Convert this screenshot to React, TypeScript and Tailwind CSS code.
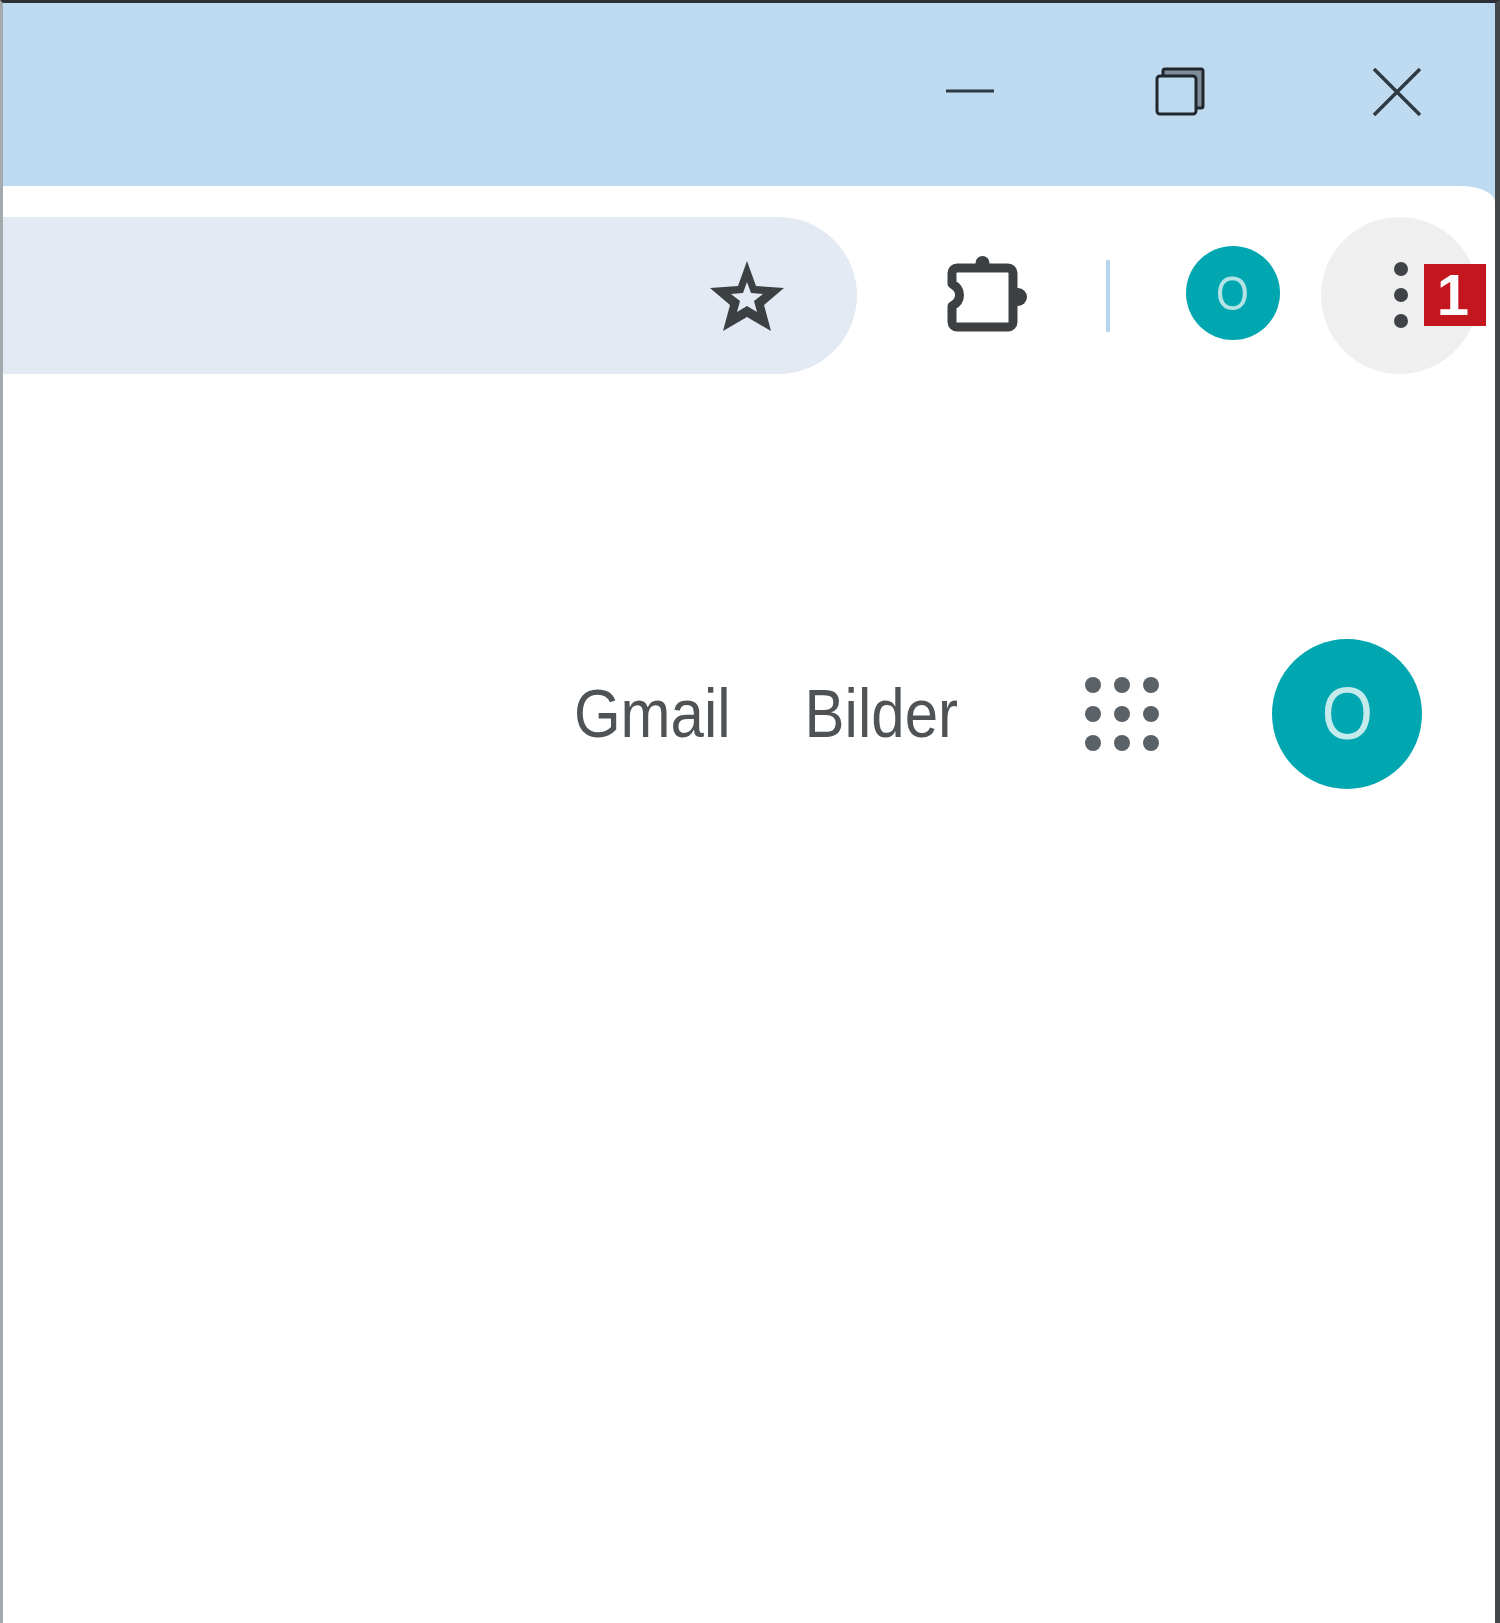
export default function App() {
  return (
    <div className="h-[1623px] w-[1500px] overflow-hidden bg-white font-['Liberation_Sans',Arial,sans-serif]">
      <div className="flex h-full w-full flex-col border-t-[3px] border-l-[3px] border-r-[5px] border-t-[#2b3036] border-l-[#a4a9ad] border-r-[#45484b] bg-[#bedaf0]">
        {/* Title bar */}
        <div className="flex h-[183px] shrink-0 items-start justify-end">
          <div className="mt-[64px] mr-[73px] flex items-start">
            <svg width="50" height="50" viewBox="0 0 50 50" className="blur-[0.5px]">
              <line x1="1" y1="24" x2="49" y2="24" stroke="#2f3942" strokeWidth="3" />
            </svg>
            <svg width="50" height="50" viewBox="0 0 50 50" className="ml-[160px] blur-[0.5px]">
              <path d="M8 9V4a2 2 0 0 1 2-2h36a2 2 0 0 1 2 2v35a2 2 0 0 1-2 2h-5" fill="#7f8d9a" stroke="#20262c" strokeWidth="3" />
              <rect x="2" y="9" width="39" height="38" rx="3" fill="#bedaf0" stroke="#20262c" strokeWidth="3" />
            </svg>
            <svg width="50" height="50" viewBox="0 0 50 50" className="ml-[167px] blur-[0.5px]">
              <path d="M2 2 48 48M48 2 2 48" fill="none" stroke="#2f3942" strokeWidth="3.5" />
            </svg>
          </div>
        </div>

        {/* Toolbar and page */}
        <div className="min-h-0 flex-1 rounded-tr-[34px_16px] bg-white pt-[31px]">
          <div className="flex h-[157px] items-center">
            <div className="flex h-full w-[854px] items-center justify-end rounded-r-full bg-[#e3eaf3] pr-[70px]">
              <svg width="78" height="72" viewBox="0 0 78 72" className="blur-[0.7px]">
                <polygon
                  points="38,1 47,26 75,28 55,45 62,71 38,57 14,71 21,45 1,28 29,26"
                  fill="#3c4043"
                />
                <polygon
                  points="38,22 42,33 54,34 45,41 48,52 38,46 28,52 31,41 22,34 34,33"
                  fill="#e3eaf3"
                />
              </svg>
            </div>
            <svg width="84" height="80" viewBox="0 0 84 80" className="mb-[4px] ml-[87px] blur-[0.7px]">
              <circle cx="38.5" cy="9" r="7" fill="#3c4043" />
              <circle cx="74" cy="43" r="9" fill="#3c4043" />
              <path
                d="M13 14H64a5 5 0 0 1 5 5V68a5 5 0 0 1-5 5H13a5 5 0 0 1-5-5V52C18 47 18 35 8 30V19a5 5 0 0 1 5-5Z"
                fill="#fff"
                stroke="#3c4043"
                strokeWidth="9"
                strokeLinejoin="round"
              />
            </svg>
            <div className="ml-[78px] h-[72px] w-[4px] bg-[#b7d6f0] blur-[0.5px]" />
            <div className="mb-[5px] ml-[76px] flex h-[94px] w-[94px] items-center justify-center rounded-full bg-[#00a7b0] text-[#b5e4e6]">
              <span className="scale-x-[0.94] scale-y-[1.08] text-[45px] leading-none">O</span>
            </div>
            <div className="relative ml-[41px] flex h-[157px] w-[157px] flex-col items-center justify-center gap-[12px] rounded-full bg-[#eeefee] pb-[2px] pl-[2px]">
              <span className="h-[14px] w-[14px] rounded-full bg-[#3f4347] blur-[0.5px]" />
              <span className="h-[14px] w-[14px] rounded-full bg-[#3f4347] blur-[0.5px]" />
              <span className="h-[14px] w-[14px] rounded-full bg-[#3f4347] blur-[0.5px]" />
              <span className="absolute top-[47px] left-[103px] flex h-[62px] w-[62px] items-center justify-center bg-[#c4161f] pr-[4px] text-[58px] leading-none font-bold text-white">
                1
              </span>
            </div>
          </div>

          {/* Google header links */}
          <div className="mt-[265px] flex h-[150px] items-center justify-end pr-[73px]">
            <span className="scale-y-[1.15] text-[60px] leading-none text-[#505356] blur-[0.6px]">Gmail</span>
            <span className="ml-[74px] scale-y-[1.15] text-[60px] leading-none text-[#505356] blur-[0.6px]">Bilder</span>
            <div className="ml-[127px] grid grid-cols-3 gap-[13px] blur-[0.5px]">
              {Array.from({ length: 9 }).map((_, i) => (
                <span key={i} className="h-[16px] w-[16px] rounded-full bg-[#5a6268]" />
              ))}
            </div>
            <div className="ml-[113px] flex h-[150px] w-[150px] items-center justify-center rounded-full bg-[#00a7b0] text-[#c4eaec]">
              <span className="scale-x-[0.94] scale-y-[1.05] text-[70px] leading-none">O</span>
            </div>
          </div>
        </div>
      </div>
    </div>
  );
}
